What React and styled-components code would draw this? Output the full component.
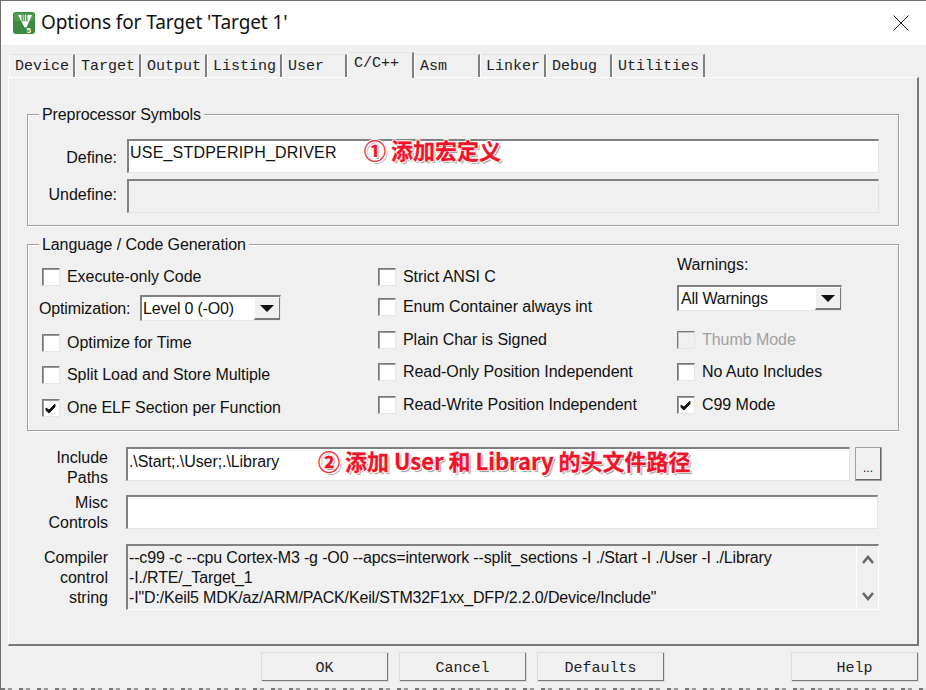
import React from "react";
import styled, { createGlobalStyle } from "styled-components";

const Global = createGlobalStyle`
  html, body { margin: 0; padding: 0; background: #f0f0f0; }
  * { box-sizing: border-box; }
`;

const Win = styled.div`
  width: 926px; height: 690px; position: relative; overflow: hidden;
  background: #f0f0f0; border-top: 1px solid #6e6e6e; border-left: 1px solid #6e6e6e;
  display: flex; flex-direction: column;
  font: 16px/20px "Liberation Sans", Arial, sans-serif; color: #111;
`;
const TitleBar = styled.div`
  height: 44px; flex: none; background: #fff; display: flex; align-items: center; padding: 0 0 0 12px;
`;
const TitleText = styled.div`
  font: 19px/26px "Noto Sans", sans-serif; margin-left: 6px; flex: 1; color: #111; padding-bottom: 2px; letter-spacing: -0.1px;
`;
const Close = styled.svg`
  width: 16px; height: 16px; margin-right: 17px; flex: none;
`;
const TabStrip = styled.div`
  height: 33px; flex: none; display: flex; align-items: flex-end; padding-left: 8px; position: relative; z-index: 1;
  margin-bottom: -1px;
`;
const Tab = styled.div`
  height: ${p => (p.$active ? 26 : 23)}px; width: ${p => p.$w}px; flex: none;
  margin-bottom: ${p => (p.$active ? 0 : 1)}px;
  font: 15px/${p => (p.$active ? 22 : 24)}px "Liberation Mono", monospace; color: #222; padding-left: ${p => (p.$active ? 6 : 5)}px;
  background: #f0f0f0; border-top: 1px solid #e4e4e4; border-left: 1px solid #fff;
  border-right: 2px solid #808080;
`;
const Panel = styled.div`
  width: 911px; height: 569px; margin-left: 7px; flex: none; background: #f0f0f0;
  border-top: 1px solid #fff; border-left: 1px solid #fff;
  border-right: 2px solid #777; border-bottom: 2px solid #777;
  padding: 36px 0 0 18px; display: flex; flex-direction: column;
`;
const Group = styled.fieldset`
  margin: 0; width: 872px; height: ${p => p.$h}px; flex: none; min-width: 0; position: relative;
  border: 1px solid #a0a0a0; box-shadow: inset 1px 1px 0 #fff, 1px 1px 0 #fff;
  padding: 0; margin-bottom: ${p => p.$mb}px;
`;
const Legend = styled.div`
  position: absolute; left: 11px; top: -10px; background: #f0f0f0; padding: 0 3px; line-height: 20px; white-space: nowrap;
  letter-spacing: -0.1px;
`;
const FieldRow = styled.div`
  display: flex; align-items: center; height: 34px; margin-bottom: ${p => p.$mb || 0}px;
`;
const Side = styled.div`
  width: 89px; flex: none; text-align: right; line-height: 20px;
  margin-top: ${p => p.$mt || 0}px; margin-bottom: ${p => p.$mb || 0}px;
`;
const Field = styled.div`
  height: 34px; width: ${p => p.$w || 752}px; margin-left: ${p => p.$ml ?? 10}px; flex: none; padding: ${p => p.$pt ?? 2}px 0 0 1px;
  background: ${p => (p.$off ? "#f0f0f0" : "#fff")}; white-space: pre; overflow: hidden;
  border-top: 2px solid #808080; border-left: 2px solid #808080;
  border-right: 1px solid #e3e3e3; border-bottom: 1px solid #e3e3e3;
  line-height: 20px; letter-spacing: ${p => p.$ls || 0}px;
`;
const Preproc = styled.div`
  padding: 24px 0 0 0; display: flex; flex-direction: column;
`;
const LangBody = styled.div`
  display: grid; grid-template-columns: 339px 299px 1fr; height: 100%; padding: 9px 0 0 11px;
`;
const Col = styled.div`
  display: flex; flex-direction: column; align-items: flex-start; padding-top: ${p => p.$pt || 0}px;
`;
const Check = styled.div`
  display: flex; align-items: center; height: 20px; margin-top: ${p => p.$mt || 0}px; margin-left: ${p => p.$ml || 0}px;
  color: ${p => (p.$off ? "#a0a0a0" : "#111")}; white-space: nowrap; letter-spacing: -0.05px;
`;
const Box = styled.span`
  width: 18px; height: 18px; flex: none; margin-right: 7px; display: flex; align-items: center; justify-content: center;
  background: ${p => (p.$off ? "#f0f0f0" : "#fff")};
  border-top: 1px solid #777; border-left: 1px solid #777;
  border-right: 1px solid #e6e6e6; border-bottom: 1px solid #e6e6e6;
  box-shadow: inset 1px 1px 0 ${p => (p.$off ? "#c4c4c4" : "#999")};
`;
const OptRow = styled.div`
  display: flex; align-items: center; height: 26px; margin-top: 8px;
`;
const OptLabel = styled.span`
  width: 101px; flex: none; letter-spacing: -0.15px; padding-top: 2px;
`;
const Combo = styled.div`
  width: ${p => p.$w}px; height: 26px; flex: none; display: flex; background: #fff; padding-left: ${p => p.$pl ?? 2}px;
  margin-top: ${p => p.$mt || 0}px;
  border-top: 2px solid #808080; border-left: 2px solid #808080;
  border-right: 1px solid #e8e8e8; border-bottom: 1px solid #e8e8e8; line-height: 20px;
`;
const ComboText = styled.span`
  flex: 1; white-space: nowrap; padding-top: 2px; letter-spacing: -0.2px;
`;
const ComboBtn = styled.span`
  width: 26px; flex: none; background: #f0f0f0; display: flex; align-items: center; justify-content: center;
  border-right: 1px solid #777; border-bottom: 2px solid #777; border-left: 1px solid #fff; border-top: 1px solid #fff;
`;
const Small = styled.div`
  line-height: 20px;
`;
const Lines = styled.div`
  width: 81px; flex: none; text-align: right; line-height: 20px; margin-right: 8px;
  margin-top: ${p => p.$mt || 0}px;
`;
const More = styled.div`
  width: 27px; height: 34px; margin-left: 5px; flex: none; display: flex; align-items: flex-end; justify-content: center;
  padding-bottom: 5px; font-size: 12px; line-height: 12px;
  border-top: 1px solid #fff; border-left: 1px solid #fff; border-right: 2px solid #666; border-bottom: 2px solid #666;
  outline: 1px solid #a0a0a0; outline-offset: -1px;
`;
const CtlRow = styled.div`
  display: flex; align-items: flex-start; height: 66px;
`;
const CtlText = styled.div`
  width: 728px; flex: none; padding: 2px 0 0 1px; line-height: 20px; white-space: pre; overflow: hidden; letter-spacing: -0.15px;
`;
const CtlBox = styled.div`
  width: 753px; height: 66px; margin-left: 10px; flex: none; display: flex;
  border-top: 2px solid #808080; border-left: 2px solid #808080; border-right: 1px solid #fff; border-bottom: 1px solid #fff;
`;
const Scroll = styled.div`
  flex: 1; display: flex; flex-direction: column; align-items: center; justify-content: space-between; padding: 9px 0 8px;
  border-left: 1px solid #fff;
`;
const IncludeRow = styled.div`
  display: flex; align-items: center; height: 34px; margin-top: 16px;
`;
const MiscRow = styled.div`
  display: flex; align-items: center; height: 34px; margin-top: 14px;
`;
const ControlGap = styled.div`
  height: 15px; flex: none;
`;
const Foot = styled.div`
  height: 30px; flex: none; margin-top: 6px; display: flex; padding-left: 260px;
`;
const Btn = styled.div`
  width: ${p => p.$w || 128}px; margin-right: ${p => p.$mr || 10}px; height: 30px; flex: none; text-align: center;
  font: 15px/32px "Liberation Mono", monospace; color: #222;
  border-top: 1px solid #fff; border-left: 1px solid #fff; border-right: 2px solid #777; border-bottom: 2px solid #777;
  outline: 1px solid #dcdcdc; outline-offset: -1px;
`;
const Noise = styled.div`
  flex: none; height: 2px; margin-top: 6px;
  background: repeating-linear-gradient(90deg,#777 0 4px,#e4e4e4 4px 7px,#999 7px 11px,#efefef 11px 18px);
`;
const Note = styled.div`
  position: absolute; left: ${p => p.$x}px; top: ${p => p.$y}px; white-space: nowrap; color: #f0142a;
  font: 700 22px/26px "Noto Sans CJK SC", "Liberation Sans", sans-serif;
  -webkit-text-stroke: 0.3px #f0142a;
  text-shadow: 1px 1px 0 #fff, -1px -1px 0 #fff, 1px -1px 0 #fff, -1px 1px 0 #fff, 2px 2px 1px #999;
`;

const Tick = () => (
  <svg width="12" height="11" viewBox="0 0 12 11"><path d="M1 5 L4 7 L10 1 L10 4 L4 10 L1 7.5 Z" fill="#111" stroke="#111" strokeWidth="0.9"/></svg>
);
const Arrow = () => (
  <svg width="14" height="7" viewBox="0 0 14 7"><path d="M0 0H14L7 7Z" fill="#111"/></svg>
);
const Chev = ({ up }) => (
  <svg width="12" height="9" viewBox="0 0 12 9"><path d={up ? "M1 8 L6 2 L11 8" : "M1 1 L6 7 L11 1"} fill="none" stroke="#666" strokeWidth="2.6"/></svg>
);
const Logo = () => (
  <svg width="22" height="22" viewBox="0 0 22 22">
    <rect width="22" height="22" rx="3" fill="#3b8a3f"/>
    <rect x="1" y="1" width="20" height="8" rx="2" fill="#4f9e4c"/>
    <path d="M5 3 H19 L13.5 15.5 H11.5 Z" fill="#fff"/>
    <path d="M9.2 3 V9.5 M11.2 3 V9.5 M13.8 3 V9.5" stroke="#3b8a3f" strokeWidth="1.2" fill="none"/>
    <text x="13.5" y="20.5" fontFamily="Liberation Sans" fontWeight="700" fontSize="8" fill="#fff">5</text>
  </svg>
);

const CB = ({ label, on, off, mt, ml }) => (
  <Check $mt={mt} $ml={ml} $off={off}>
    <Box $off={off}>{on && <Tick />}</Box>
    {label}
  </Check>
);

const tabs = [["Device",66],["Target",66],["Output",66],["Listing",75],["User",65],["C/C++",67,1],["Asm",66],["Linker",66],["Debug",66],["Utilities",93]];

export default function App() {
  return (
    <Win>
      <Global />
      <TitleBar>
        <Logo />
        <TitleText>Options for Target 'Target 1'</TitleText>
        <Close viewBox="0 0 16 16"><path d="M0.5 0.5 L15.5 15.5 M15.5 0.5 L0.5 15.5" stroke="#222" strokeWidth="1" fill="none"/></Close>
      </TitleBar>
      <TabStrip>
        {tabs.map(([t, w, a]) => (
          <Tab key={t} $w={w} $active={a}>{t}</Tab>
        ))}
      </TabStrip>
      <Panel>
        <Group $h={112} $mb={18}>
          <Legend>Preprocessor Symbols</Legend>
          <Preproc>
            <FieldRow $mb={6}><Side $mt={4}>Define:</Side><Field $ls={0.2}>USE_STDPERIPH_DRIVER</Field></FieldRow>
            <FieldRow><Side $mb={2}>Undefine:</Side><Field $off /></FieldRow>
          </Preproc>
        </Group>
        <Group $h={187} $mb={0}>
          <Legend>Language / Code Generation</Legend>
          <LangBody>
            <Col $pt={13}>
              <CB label="Execute-only Code" ml={3} />
              <OptRow><OptLabel>Optimization:</OptLabel><Combo $w={141} $pl={1}><ComboText>Level 0 (-O0)</ComboText><ComboBtn><Arrow /></ComboBtn></Combo></OptRow>
              <CB label="Optimize for Time" ml={3} mt={12} />
              <CB label="Split Load and Store Multiple" ml={3} mt={12} />
              <CB label="One ELF Section per Function" on ml={3} mt={13} />
            </Col>
            <Col $pt={13}>
              <CB label="Strict ANSI C" />
              <CB label="Enum Container always int" mt={10} />
              <CB label="Plain Char is Signed" mt={13} />
              <CB label="Read-Only Position Independent" mt={12} />
              <CB label="Read-Write Position Independent" mt={13} />
            </Col>
            <Col $pt={1}>
              <Small>Warnings:</Small>
              <Combo $w={165} $mt={10}><ComboText>All Warnings</ComboText><ComboBtn><Arrow /></ComboBtn></Combo>
              <CB label="Thumb Mode" off mt={19} />
              <CB label="No Auto Includes" mt={12} />
              <CB label="C99 Mode" on mt={13} />
            </Col>
          </LangBody>
        </Group>
        <IncludeRow>
          <Lines $mt={8}>Include<br />Paths</Lines>
          <Field $w={724} $pt={3} $ls={-0.08}>.\Start;.\User;.\Library</Field>
          <More>...</More>
        </IncludeRow>
        <MiscRow>
          <Lines $mt={2}>Misc<br />Controls</Lines>
          <Field />
        </MiscRow>
        <ControlGap />
        <CtlRow>
          <Lines $mt={4}>Compiler<br />control<br />string</Lines>
          <CtlBox>
            <CtlText>{`--c99 -c --cpu Cortex-M3 -g -O0 --apcs=interwork --split_sections -I ./Start -I ./User -I ./Library\n-I./RTE/_Target_1\n-I"D:/Keil5 MDK/az/ARM/PACK/Keil/STM32F1xx_DFP/2.2.0/Device/Include"`}</CtlText>
            <Scroll><Chev up /><Chev /></Scroll>
          </CtlBox>
        </CtlRow>
      </Panel>
      <Foot>
        <Btn>OK</Btn>
        <Btn>Cancel</Btn>
        <Btn $mr={126}>Defaults</Btn>
        <Btn>Help</Btn>
      </Foot>
      <Noise />
      <Note $x={363} $y={135}>① 添加宏定义</Note>
      <Note $x={317} $y={446}>② 添加 User 和 Library 的头文件路径</Note>
    </Win>
  );
}
